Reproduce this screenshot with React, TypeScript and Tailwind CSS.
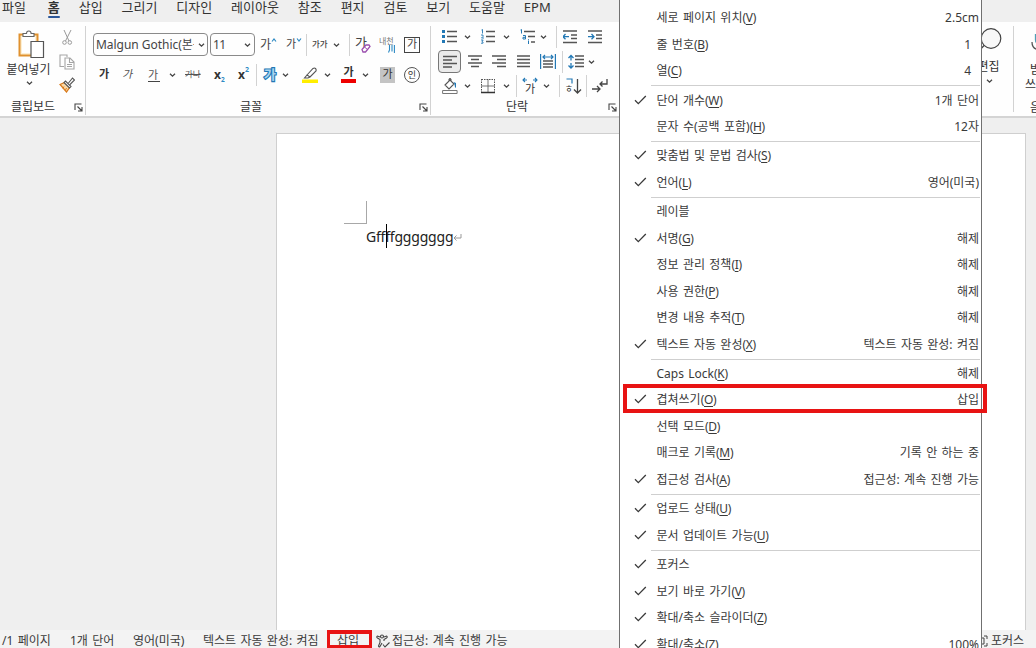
import type { ReactNode } from "react";

const tabs = ["삽입", "그리기", "디자인", "레이아웃", "참조", "편지", "검토", "보기", "도움말", "EPM"];

type Item = {
  label: string;
  hotkey?: string;
  value?: string;
  checked?: boolean;
  narrow?: boolean;
};

const menu: Item[][] = [
  [
    { label: "세로 페이지 위치", hotkey: "V", value: "2.5cm" },
    { label: "줄 번호", hotkey: "B", value: "1", narrow: true },
    { label: "열", hotkey: "C", value: "4", narrow: true },
  ],
  [
    { label: "단어 개수", hotkey: "W", value: "1개 단어", checked: true },
    { label: "문자 수(공백 포함)", hotkey: "H", value: "12자" },
  ],
  [
    { label: "맞춤법 및 문법 검사", hotkey: "S", checked: true },
    { label: "언어", hotkey: "L", value: "영어(미국)", checked: true },
  ],
  [
    { label: "레이블" },
    { label: "서명", hotkey: "G", value: "해제", checked: true },
    { label: "정보 관리 정책", hotkey: "I", value: "해제" },
    { label: "사용 권한", hotkey: "P", value: "해제" },
    { label: "변경 내용 추적", hotkey: "T", value: "해제" },
    { label: "텍스트 자동 완성", hotkey: "X", value: "텍스트 자동 완성: 켜짐", checked: true },
  ],
  [
    { label: "Caps Lock", hotkey: "K", value: "해제" },
    { label: "겹쳐쓰기", hotkey: "O", value: "삽입", checked: true },
    { label: "선택 모드", hotkey: "D" },
    { label: "매크로 기록", hotkey: "M", value: "기록 안 하는 중" },
    { label: "접근성 검사", hotkey: "A", value: "접근성: 계속 진행 가능", checked: true },
  ],
  [
    { label: "업로드 상태", hotkey: "U", checked: true },
    { label: "문서 업데이트 가능", hotkey: "U", checked: true },
  ],
  [
    { label: "포커스", checked: true },
    { label: "보기 바로 가기", hotkey: "V", checked: true },
    { label: "확대/축소 슬라이더", hotkey: "Z", checked: true },
    { label: "확대/축소", hotkey: "Z", value: "100%", checked: true },
  ],
];

function Chevron({ className = "" }: { className?: string }) {
  return (
    <svg className={`shrink-0 ${className}`} width="7" height="6" viewBox="0 0 7 6" fill="none" stroke="#444" strokeWidth="1.3">
      <path d="M1 1.7 3.5 4.2 6 1.7" />
    </svg>
  );
}

function Divider({ className = "" }: { className?: string }) {
  return <div className={`h-[22px] w-px shrink-0 bg-[#d2d2d2] ${className}`} />;
}

function Icon({ className = "", w = 16, children }: { className?: string; w?: number; children: ReactNode }) {
  return (
    <svg className={`shrink-0 ${className}`} width={w} height="16" viewBox={`0 0 ${w} 16`} fill="none" stroke="#555" strokeWidth="1.3">
      {children}
    </svg>
  );
}

function Launcher({ className = "" }: { className?: string }) {
  return (
    <svg className={`shrink-0 ${className}`} width="9" height="9" viewBox="0 0 9 9" fill="none" stroke="#444" strokeWidth="1.1">
      <path d="M1 7V1h6.500M3.500 3.500 7.500 7.500M8 4v4H4" />
    </svg>
  );
}

function Clipboard() {
  return (
    <div className="flex h-[89px] w-[86px] shrink-0 flex-col border-r border-[#d2d2d2]">
      <div className="flex h-[73px]">
        <div className="flex w-[55px] flex-col items-center pt-[3px] pl-[2px]">
          <svg className="ml-[4px]" width="28" height="31" viewBox="0 0 28 31" fill="none">
            <path d="M2.500 5.500h18v21h-18z" fill="#fdf0d5" stroke="#e0912f" strokeWidth="2" />
            <path d="M5 8h13v16H5z" fill="#fff" />
            <path d="M6 7.500v-3h3.500a2.300 2.500 0 0 1 4.600 0H17v3z" fill="#fff" stroke="#666" strokeWidth="1.100" />
            <path d="M14 12.500h12.500v16H14z" fill="#fff" stroke="#555" strokeWidth="1.200" />
          </svg>
          <div className="mt-[2px] text-[12px] leading-[15px] whitespace-nowrap">붙여넣기</div>
          <Chevron className="mt-[3px] ml-[2px]" />
        </div>
        <div className="flex flex-col pt-[4px] pl-[4px]">
          <Icon>
            <g stroke="#999" strokeWidth="1">
              <path d="M5 0 10 11M12 0 6.500 11" />
              <circle cx="5.500" cy="12.500" r="1.800" />
              <circle cx="10.800" cy="12.500" r="1.800" />
            </g>
          </Icon>
          <Icon className="mt-[8px]">
            <g stroke="#a5a5a5" strokeWidth="1.100">
              <path d="M5 12.500H1V1h7v2" />
              <path d="M6 4h5l4 4v7H6zM10.500 4v4.500H15M8 10.500h5M8 12.500h5" />
            </g>
          </Icon>
          <Icon className="mt-[7px]">
            <path d="M1 7.500 5.500 5.500l5 5L7.500 15z" fill="#f9d9a8" stroke="#d97b1c" />
            <path d="m5 9.500-1 2M7.500 11l-1.200 2.500" stroke="#d97b1c" strokeWidth="1" />
            <path d="m5 5.500 5.500 5.500 1.500-1.500L6.500 4zM9.500 6l4-5 2 2-4.500 4.500" fill="#fff" stroke="#555" strokeWidth="1.100" />
          </Icon>
        </div>
      </div>
      <div className="flex items-center text-[12px] leading-[16px]">
        <span className="ml-[11px] w-[63px]">클립보드</span>
        <Launcher />
      </div>
    </div>
  );
}

function FontGroup() {
  return (
    <div className="flex h-[89px] w-[345px] shrink-0 flex-col border-r border-[#d2d2d2] pl-[7px]">
      <div className="mt-[7px] flex h-[23px] items-center text-[#444]">
        <div className="flex h-[23px] w-[115px] shrink-0 items-center rounded-[4px] border border-[#8a8a8a] pl-[2px]">
          <span className="w-[98px] overflow-hidden text-[12px] -tracking-[0.030px] whitespace-nowrap">Malgun Gothic(본문</span>
          <Chevron className="ml-[4px]" />
        </div>
        <div className="ml-[2px] flex h-[23px] w-[45px] shrink-0 items-center rounded-[4px] border border-[#8a8a8a] pl-[2px]">
          <span className="w-[31px] text-[12px] -tracking-[0.500px]">11</span>
          <Chevron />
        </div>
        <div className="ml-[5px] flex w-[17px] shrink-0 text-[12px]">
          가
          <svg className="mt-[1px] shrink-0" width="6" height="6" viewBox="0 0 6 6" fill="none" stroke="#2d8ac4" strokeWidth="1.200">
            <path d="M1 4.500 3 2l2 2.500" />
          </svg>
        </div>
        <div className="ml-[9px] flex w-[15px] shrink-0 text-[11px]">
          가
          <svg className="mt-[1px] shrink-0" width="6" height="6" viewBox="0 0 6 6" fill="none" stroke="#2d8ac4" strokeWidth="1.200">
            <path d="M1 1.500 3 4l2-2.500" />
          </svg>
        </div>
        <Divider className="ml-[5px]" />
        <div className="ml-[5px] w-[16px] shrink-0 text-[8.500px] font-medium whitespace-nowrap">가가</div>
        <Chevron className="ml-[5px]" />
        <Divider className="ml-[9px]" />
        <div className="relative ml-[5px] h-[20px] w-[16px] shrink-0 text-[13px] leading-[15px]">
          가
          <svg className="absolute right-0 bottom-[2px]" width="10" height="9" viewBox="0 0 10 9">
            <path d="m1 5.500 4-4.500h3l1 1.500-4.500 5.500H2z" fill="#fff" stroke="#9b4fae" strokeWidth="1.300" />
            <path d="m3.500 3 3 2.500" stroke="#9b4fae" />
          </svg>
        </div>
        <div className="ml-[8px] flex w-[16px] shrink-0 flex-col text-[8px] leading-[8px] whitespace-nowrap text-[#777]">
          내천
          <svg className="ml-[9px]" width="7" height="8" viewBox="0 0 7 8" fill="none" stroke="#2d8ac4" strokeWidth="1.100">
            <path d="M1.500 0v5L.5 7.500M4 0v6.500M6.400 0v8" />
          </svg>
        </div>
        <div className="ml-[9px] flex size-[16px] shrink-0 items-center justify-center border border-[#444] pb-[1px] text-[11px]">가</div>
      </div>

      <div className="mt-[7px] flex h-[23px] items-center text-[#333]">
        <div className="ml-[6px] w-[12px] shrink-0 text-[11px] font-bold">가</div>
        <div className="ml-[12px] w-[12px] shrink-0 -skew-x-12 text-[11px] text-[#555]">가</div>
        <div className="ml-[13px] w-[12px] shrink-0 border-b border-[#444] text-[11px] leading-[13px] text-[#555]">가</div>
        <Chevron className="ml-[9px]" />
        <div className="ml-[9px] w-[17px] shrink-0 text-[8.500px] whitespace-nowrap text-[#555] line-through">가나</div>
        <div className="ml-[12px] flex w-[12px] shrink-0 items-center text-[12px] font-bold">
          x<span className="mt-[11px] text-[6.500px] leading-[8px] text-[#2d8ac4]">2</span>
        </div>
        <div className="ml-[12px] flex w-[13px] shrink-0 items-center text-[12px] font-bold">
          x<span className="mb-[9px] text-[7px] leading-[8px] text-[#2d8ac4]">2</span>
        </div>
        <Divider className="ml-[5px]" />
        <div className="ml-[7px] w-[14px] shrink-0 text-[13px] font-bold text-[#a9d3ee] [paint-order:stroke_fill] [-webkit-text-stroke:2.200px_#2278b5]">가</div>
        <Chevron className="ml-[4px]" />
        <Icon className="ml-[13px]">
          <path d="M0 12.500h16v3.500H0z" fill="#ffee00" stroke="none" />
          <path d="m5 8 6-6.500q1.500-1 2.500 0t.5 2.500L8 10zM5 8l-2.500 3H6l2-1" fill="#fff" stroke="#555" strokeWidth="1.100" />
        </Icon>
        <Chevron className="ml-[6px]" />
        <div className="ml-[10px] flex h-[16px] w-[15px] shrink-0 justify-center border-b-[4px] border-[#ee0000] text-[11px] leading-[10px] font-bold">가</div>
        <Chevron className="ml-[6px]" />
        <div className="ml-[11px] flex h-[16px] w-[15px] shrink-0 items-center justify-center bg-[#c4c4c4] text-[11px]">가</div>
        <div className="ml-[9px] flex size-[16px] shrink-0 items-center justify-center rounded-full border border-[#555] text-[9px]">인</div>
      </div>
      <div className="mt-[13px] flex items-center text-[12px] leading-[16px]">
        <span className="ml-[147px] w-[179px]">글꼴</span>
        <Launcher />
      </div>
    </div>
  );
}

function Paragraph() {
  return (
    <div className="flex h-[89px] w-[188px] shrink-0 flex-col pl-[7px]">
      <div className="-mt-[1px] flex h-[24px] items-center">
        <Icon className="ml-[4px]" w={15}>
          <path d="M5 2.500h10M5 7.500h10M5 12.500h10" />
          <path d="M0 1h3v3H0zM0 6h3v3H0zM0 11h3v3H0z" fill="#2278b5" stroke="none" />
        </Icon>
        <Chevron className="ml-[7px]" />
        <Icon className="ml-[10px]" w={14}>
          <path d="M5 2.500h9M5 7.500h9M5 12.500h9" />
          <path d="M.5 1 1.500.5v4M0 6h2v1.500L.5 9H3M0 11h2.200L1 12.500l1 .5v1.200H0" stroke="#2278b5" strokeWidth=".9" />
        </Icon>
        <Chevron className="ml-[8px]" />
        <Icon className="ml-[10px]" w={15}>
          <path d="M4 2.500h11M8 7.500h7M11 13h4" />
          <path d="M.5 1 1.500.5v4M3 6.500h2.500V10H3V8.300h2.500M8.500 11.500V15M8.500 10v.8" stroke="#2278b5" strokeWidth="1" />
        </Icon>
        <Chevron className="ml-[5px]" />
        <Divider className="ml-[9px]" />
        <Icon className="ml-[6px]" w={14}>
          <path d="M0 2h14M8 6h6M8 9.500h6M0 13.500h14" />
          <path d="M0 7.700h6M2.500 5 0 7.700l2.500 2.600" stroke="#2278b5" />
        </Icon>
        <Icon className="ml-[11px]" w={14}>
          <path d="M0 2h14M8 6h6M8 9.500h6M0 13.500h14" />
          <path d="M0 7.700h6M3.500 5 6 7.700l-2.500 2.600" stroke="#2278b5" />
        </Icon>
      </div>
      <div className="mt-[1px] flex h-[23px] items-center">
        <div className="flex h-[23px] w-[23px] shrink-0 items-center justify-center rounded-[4px] border border-[#777] bg-[#ebebeb]">
          <Icon w={14}>
            <path d="M0 2.500h14M0 6h9M0 9.500h14M0 13h9" />
          </Icon>
        </div>
        <Icon className="ml-[7px]" w={14}>
          <path d="M0 2h14M3 5.500h8M0 9h14M3 12.500h8" />
        </Icon>
        <Icon className="ml-[10px]" w={14}>
          <path d="M0 2h14M5 5.500h9M0 9h14M5 12.500h9" />
        </Icon>
        <Icon className="ml-[11px]" w={13}>
          <path d="M0 2h13M0 5.500h13M0 9h13M0 12.500h13" />
        </Icon>
        <Icon className="ml-[10px]">
          <path d="M.6 0v15M15.400 0v15M3 3h10M5 1 3 3l2 2M11 1l2 2-2 2" stroke="#2278b5" strokeWidth="1.200" />
          <path d="M3 7h10M3 10h10M3 13h10" />
        </Icon>
        <Divider className="ml-[6px]" />
        <Icon className="ml-[5px]">
          <path d="M7 2h9M7 5.500h9M7 9h9M7 12.500h9" />
          <path d="M3 1.500v5M3 9v5M.5 4 3 1.500 5.500 4M.5 11.500 3 14l2.500-2.500" stroke="#2278b5" />
        </Icon>
        <Chevron className="ml-[4px]" />
      </div>
      <div className="mt-[1px] flex h-[23px] items-center">
        <Icon className="ml-[4px]">
          <path d="M.6 12.500h14.500v3H.6z" stroke="#777" strokeWidth="1" />
          <path d="m3 7 5-5 4 4-5 5zM7 4V1.500q1-2 2 0V4" fill="#fff" stroke="#555" strokeWidth="1.100" />
          <path d="m11.500 4 2.500 1v5q-1.500-1-1.500-4z" fill="#2278b5" stroke="none" />
        </Icon>
        <Chevron className="ml-[6px]" />
        <Icon className="ml-[10px]" w={14}>
          <path d="M.5 1.500h13M.5 1v13M13.500 1v13" strokeDasharray="1.500 1" strokeWidth="1" />
          <path d="M0 8h14M7 1v13" strokeWidth=".8" />
          <path d="M0 14.500h14" stroke="#333" strokeWidth="1.500" />
        </Icon>
        <Chevron className="ml-[8px]" />
        <Divider className="ml-[6px]" />
        <div className="ml-[5px] flex w-[16px] shrink-0 flex-col items-center text-[11px] leading-[11px]">
          <svg width="16" height="6" viewBox="0 0 16 6" fill="none" stroke="#2278b5" strokeWidth="1.100">
            <path d="M5 3H1M3 1 1 3l2 2M11 3h4M13 1l2 2-2 2" />
          </svg>
          가
        </div>
        <Chevron className="ml-[5px]" />
        <Divider className="ml-[9px]" />
        <div className="ml-[5px] flex w-[17px] shrink-0 items-center">
          <div className="flex w-[8px] flex-col items-center">
            <svg width="7" height="6" viewBox="0 0 7 6" fill="none" stroke="#2278b5" strokeWidth="1.200">
              <path d="M.5 1h5.500v4.500" />
            </svg>
            <span className="text-[9px] leading-[10px]">ㅎ</span>
          </div>
          <svg width="9" height="16" viewBox="0 0 9 16" fill="none" stroke="#444" strokeWidth="1.300">
            <path d="M4.500 1v14M1 11.500 4.500 15 8 11.500" />
          </svg>
        </div>
        <Divider className="ml-[4px]" />
        <Icon className="ml-[5px]">
          <path d="M15 1v5H8M10.500 3.500 8 6l2.500 2.500M0 11h8M5 8l3 3-3 3" stroke="#444" />
        </Icon>
      </div>
      <div className="mt-[2px] flex items-center text-[12px] leading-[16px]">
        <span className="ml-[68px] w-[102px]">단락</span>
        <Launcher />
      </div>
    </div>
  );
}

function Ribbon() {
  return (
    <div className="flex h-[96px] shrink-0 justify-between overflow-hidden border-b-2 border-[#d4d4d4] bg-[#fefefe] pt-[4px]">
      <div className="flex">
        <Clipboard />
        <FontGroup />
        <Paragraph />
      </div>
      <div className="flex w-[62px] shrink-0">
        <div className="flex h-[86px] w-[40px] flex-col items-center border-r border-[#d2d2d2] pr-[11px]">
          <svg className="mt-[1px] ml-[6px] shrink-0" width="24" height="26" viewBox="0 0 24 26" fill="none" stroke="#444" strokeWidth="1.200">
            <circle cx="12" cy="11.500" r="9.800" fill="#f8f8f8" />
            <path d="M5 18.500 0 24" />
          </svg>
          <div className="mt-[6px] ml-[1px] text-[12px] leading-[16px] whitespace-nowrap">편집</div>
          <Chevron className="mt-[3px] ml-[3px]" />
        </div>
        <div className="flex w-[22px] flex-col overflow-hidden text-[12px] leading-[15px] whitespace-nowrap">
          <svg className="mt-[8px] ml-[17px] shrink-0" width="12" height="20" viewBox="0 0 12 20" fill="none" stroke="#555" strokeWidth="1.300">
            <path d="M1 8q0 8 9 8" />
            <path d="M4.500 0v6q0 4 6 5" stroke="#4f9fb5" />
          </svg>
          <span className="mt-[8px] ml-[16px]">받아</span>
          <span className="ml-[11px]">쓰기</span>
          <span className="mt-[8px] ml-[16px]">음성</span>
        </div>
      </div>
    </div>
  );
}

function MenuRow({ item }: { item: Item }) {
  return (
    <div className="flex h-[26.5px] items-center">
      <div className="flex w-[36.5px] shrink-0 pl-[14px]">
        {item.checked && (
          <svg width="13" height="10" viewBox="0 0 13 10" fill="none" stroke="#3a3a3a" strokeWidth="1.300">
            <path d="M1 5.300 4.300 8.600 11.800 1" />
          </svg>
        )}
      </div>
      <span className="flex-1 pt-[2px]">
        {item.label}
        {item.hotkey && (
          <span className="-tracking-[0.3px]">
            (<span className="underline underline-offset-2">{item.hotkey}</span>)
          </span>
        )}
      </span>
      <span className={item.narrow ? "pt-[2px] pr-[10px]" : "pt-[2px] pr-[2px]"}>{item.value}</span>
    </div>
  );
}

function StatusMenu() {
  return (
    <div className="absolute top-0 left-[619px] h-[648px] w-[363px] overflow-hidden border-x border-[#707070] bg-white pt-[4px] text-[12px] text-[#3a3a3a] [word-spacing:1.200px]">
      {menu.map((group, i) => (
        <div key={i}>
          {i > 0 && (
            <div className="mr-[1px] ml-[31px] flex h-[2.800px] items-end">
              <div className="h-px w-full bg-[#cfcfcf]" />
            </div>
          )}
          {group.map((item, j) => (
            <MenuRow key={j} item={item} />
          ))}
        </div>
      ))}
    </div>
  );
}

function StatusBar() {
  return (
    <div className="flex h-[18px] shrink-0 items-center bg-[#f3f3f3] pt-[4px] pl-[2px] text-[12px] leading-[14px] whitespace-nowrap text-[#3a3a3a] [word-spacing:1.200px]">
      <span className="w-[68px]">/1 페이지</span>
      <span className="w-[63px]">1개 단어</span>
      <span className="w-[70px]">영어(미국)</span>
      <span className="w-[134px]">텍스트 자동 완성: 켜짐</span>
      <span className="w-[39px]">삽입</span>
      <svg className="mr-[2px]" width="14" height="14" viewBox="0 0 14 14" fill="none" stroke="#444" strokeWidth="1.100">
        <circle cx="6" cy="2.500" r="1.500" />
        <path d="M4 3 1.500 2Q0 3 1.500 4L4 5.500v3L2.500 12q.5 1.500 1.500.5l2-3.500M8 3l2.500-1q1.500 1 0 2L8 5.500V7M7 10.500 9 13l4.500-4.500" />
      </svg>
      <span>접근성: 계속 진행 가능</span>
      <svg className="ml-auto" width="12" height="12" viewBox="0 0 12 12" fill="none" stroke="#444">
        <path d="M8 1h3v3M11 8v3H8M5 3v6h3V3z" />
      </svg>
      <span className="mr-[12px] ml-[3px]">포커스</span>
    </div>
  );
}

export default function App() {
  return (
    <div className="relative flex h-[648px] w-[1036px] flex-col overflow-hidden bg-[#efefef] font-['Noto_Sans','Noto_Sans_CJK_KR',sans-serif] text-[#333]">
      <div className="flex h-[22px] shrink-0 gap-[18.900px] pl-[2px] text-[13px] leading-[15px]">
        <span>파일</span>
        <div className="ml-[3px] flex flex-col items-center font-bold">
          홈
          <div className="mt-[1px] h-[2px] w-[12px] rounded bg-[#2b579a]" />
        </div>
        {tabs.map((tab) => (
          <span key={tab}>{tab}</span>
        ))}
      </div>
      <Ribbon />
      <div className="flex min-h-0 flex-1 pt-[15px] pl-[276px]">
        <div className="w-[750px] border border-b-0 border-[#cfcfcf] bg-white pt-[67px] pl-[67px]">
          <div className="size-[23px] border-r border-b border-[#a8a8a8]" />
          <div className="relative flex h-[25px] items-center pl-[22px] text-[14px] -tracking-[0.200px] text-[#222]">
            Gffffggggggg
            <svg className="mt-[2px]" width="9" height="9" viewBox="0 0 9 9" fill="none" stroke="#999">
              <path d="M8 1v4H1M3.500 2.500 1 5l2.500 2.500" />
            </svg>
            <div className="absolute top-0 left-[42px] h-[24px] w-px bg-black" />
          </div>
        </div>
      </div>
      <StatusBar />

      <StatusMenu />
      {/* highlighted menu entry and status bar entry */}
      <div className="absolute top-[384px] left-[623px] h-[29px] w-[364px] border-[4px] border-[#e81313]" />
      <div className="absolute top-[630px] left-[327px] h-[18px] w-[45px] border-[3px] border-t-[4px] border-[#e81313]" />
    </div>
  );
}
